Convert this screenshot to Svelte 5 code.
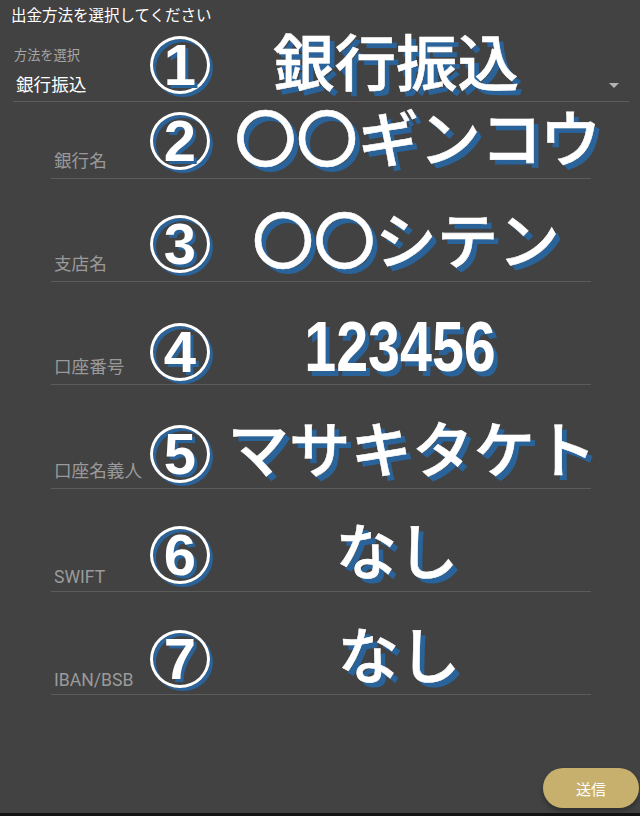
<script>
	const top = { no: '①', value: '銀行振込', noTop: 11, valueX: 383, valueY: 40 };
	const fields = [
		{ label: '銀行名', no: '②', value: '〇〇ギンコウ', noTop: 10, valueX: 367, valueY: 39 },
		{ label: '支店名', no: '③', value: '〇〇シテン', noTop: 36, valueX: 355, valueY: 64 },
		{ label: '口座番号', no: '④', value: '123456', noTop: 41, valueX: 349, valueY: 65, digits: true },
		{ label: '口座名義人', no: '⑤', value: 'マサキタケト', noTop: 40, valueX: 361, valueY: 67 },
		{ label: 'SWIFT', no: '⑥', value: 'なし', noTop: 37, valueX: 346, valueY: 65, latin: true },
		{ label: 'IBAN/BSB', no: '⑦', value: 'なし', noTop: 38, valueX: 348, valueY: 66, latin: true }
	];
	const digit = (s) => String(s.charCodeAt(0) - 0x245f);
</script>

<div class="page">
	<h1>出金方法を選択してください</h1>

	<div class="select">
		<span class="select-label">方法を選択</span>
		<span class="select-value">銀行振込</span>
		<span class="arrow"></span>
		<span class="ring" style="top: {top.noTop}px">{digit(top.no)}</span>
		<span class="value" style="left: {top.valueX}px; top: {top.valueY}px">{top.value}</span>
	</div>

	<div class="fields">
		{#each fields as field}
			<div class="field" class:latin={field.latin}>
				<span class="field-label">{field.label}</span>
				<span class="ring" style="top: {field.noTop}px">{digit(field.no)}</span>
				<span class="value" class:digits={field.digits} style="left: {field.valueX}px; top: {field.valueY}px">{field.value}</span>
			</div>
		{/each}
	</div>

	<div class="actions">
		<button>送信</button>
	</div>
</div>

<style>
	:global(body) {
		margin: 0;
		background: #121212;
	}

	.page {
		display: flex;
		flex-direction: column;
		height: 813px;
		background: #424242;
		font-family: Roboto, 'Noto Sans CJK JP', sans-serif;
		overflow: hidden;
	}

	h1 {
		margin: 0;
		padding: 7px 0 0 11px;
		font-size: 15.5px;
		line-height: 18px;
		font-weight: 400;
		color: #fff;
	}

	.select {
		position: relative;
		display: flex;
		flex-direction: column;
		height: 77px;
		margin: 0 11px 0 13px;
		box-sizing: border-box;
		padding-top: 23px;
		border-bottom: 1px solid #5c5c5c;
	}

	.select-label {
		padding-left: 1px;
		font-size: 13.2px;
		line-height: 16px;
		color: #a6a6a6;
	}

	.select-value {
		padding: 9px 0 0 3px;
		font-size: 17.6px;
		line-height: 24px;
		color: #fff;
	}

	.arrow {
		position: absolute;
		right: 10px;
		top: 58px;
		border: 5.5px solid transparent;
		border-top-color: #b3b3b3;
		border-bottom: 0;
	}

	.fields {
		display: flex;
		flex-direction: column;
		margin: 0 49px 0 51px;
	}

	.field {
		position: relative;
		display: flex;
		align-items: flex-end;
		box-sizing: border-box;
		height: 103.4px;
		padding: 0 0 5px 3px;
		border-bottom: 1px solid #5c5c5c;
	}

	.field:first-child {
		height: 76.5px;
	}

	.field.latin {
		padding-bottom: 2px;
	}

	.field-label {
		font-size: 17.6px;
		line-height: 24px;
		color: #9a9a9a;
	}

	.ring {
		position: absolute;
		left: 99px;
		box-sizing: border-box;
		display: flex;
		align-items: center;
		justify-content: center;
		width: 60px;
		height: 58px;
		border: 3px solid #fff;
		border-radius: 50%;
		box-shadow: 3px 3px 0 0 #2a6399, inset 3px 3px 0 0 #2a6399;
		color: #fff;
		font-family: 'Liberation Sans', sans-serif;
		font-size: 58px;
		font-weight: 700;
		line-height: 1;
		text-shadow: 3px 3px 0 #2a6399;
	}

	.select .ring {
		left: 137px;
	}

	.value {
		position: absolute;
		transform: translate(-50%, -50%);
		color: #fff;
		font-size: 61.5px;
		font-weight: 500;
		line-height: 84px;
		white-space: nowrap;
		-webkit-text-stroke: 0.6px #fff;
		text-shadow: 5px 5px 0 #2a6399;
	}

	.digits {
		transform: translate(-50%, -50%) scaleX(0.82);
		font-family: 'Liberation Sans', sans-serif;
		font-size: 70px;
		font-weight: 700;
		-webkit-text-stroke: 0;
	}

	.actions {
		display: flex;
		justify-content: flex-end;
		margin-top: auto;
		padding: 0 1px 5px 0;
	}

	button {
		width: 96px;
		height: 40px;
		border: 0;
		border-radius: 20px;
		background: #c7b06d;
		color: #fff;
		font: inherit;
		font-size: 15px;
		box-shadow: 0 3px 5px rgba(0, 0, 0, 0.3);
	}
</style>
